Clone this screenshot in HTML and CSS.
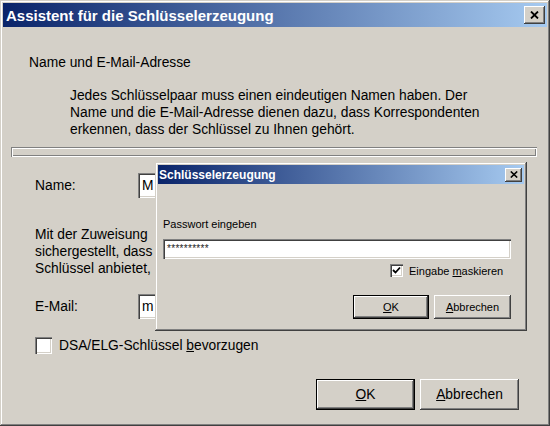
FILE: index.html
```html
<!DOCTYPE html>
<html lang="de">
<head>
  <meta charset="UTF-8" />
  <title>Assistent für die Schlüsselerzeugung</title>
  <link rel="stylesheet" href="styles.css">
</head>
<body>
  <div class="window main">
    <div class="titlebar">
      <span class="title">Assistent für die Schlüsselerzeugung</span>
      <button class="close" title="Schließen">
        <svg width="9" height="8" viewBox="0 0 9 8"><path d="M1 0.5 L8 7.5 M8 0.5 L1 7.5" stroke="#000" stroke-width="1.8" fill="none"/></svg>
      </button>
    </div>

    <div class="content">
      <div class="heading">Name und E-Mail-Adresse</div>
      <p class="intro">
        Jedes Schlüsselpaar muss einen eindeutigen Namen haben. Der<br>
        Name und die E-Mail-Adresse dienen dazu, dass Korrespondenten<br>
        erkennen, dass der Schlüssel zu Ihnen gehört.
      </p>

      <div class="progress"></div>

      <!-- values and the rest of the hint are hidden under the password dialog -->
      <div class="row">
        <label>Name:</label>
        <div class="input">M</div>
      </div>

      <p class="hint">
        Mit der Zuweisung<br>
        sichergestellt, dass<br>
        Schlüssel anbietet,
      </p>

      <div class="row">
        <label>E-Mail:</label>
        <div class="input">m</div>
      </div>

      <label class="check">
        <span class="box"></span>
        <span>DSA/ELG-Schlüssel <u>b</u>evorzugen</span>
      </label>

      <div class="buttons">
        <button class="btn default"><u>O</u>K</button>
        <button class="btn"><u>A</u>bbrechen</button>
      </div>
    </div>

    <div class="window dialog">
      <div class="titlebar">
        <span class="title">Schlüsselerzeugung</span>
        <button class="close" title="Schließen">
          <svg width="8" height="7" viewBox="0 0 8 7"><path d="M0.8 0.5 L7.2 6.5 M7.2 0.5 L0.8 6.5" stroke="#000" stroke-width="1.6" fill="none"/></svg>
        </button>
      </div>
      <div class="content">
        <div class="prompt">Passwort eingeben</div>
        <div class="input pw">**********</div>
        <label class="check small">
          <span class="box">
            <svg width="9" height="9" viewBox="0 0 9 9"><path d="M1 4 L3.5 6.5 L8 1.5" stroke="#000" stroke-width="1.8" fill="none"/></svg>
          </span>
          <span>Eingabe <u>m</u>askieren</span>
        </label>
        <div class="buttons">
          <button class="btn default"><u>O</u>K</button>
          <button class="btn"><u>A</u>bbrechen</button>
        </div>
      </div>
    </div>
  </div>
</body>
</html>
```

FILE: styles.css
```css
* {
  box-sizing: border-box;
}

body {
  margin: 0;
  font-family: 'Liberation Sans', Arial, sans-serif;
  font-size: 13.8px;
  color: #000;
  background: #d4d0c8;
}

.window {
  background: #d4d0c8;
  padding: 3px;
  box-shadow: inset -1px -1px #404040, inset 1px 1px #d4d0c8,
              inset -2px -2px #808080, inset 2px 2px #fff;
}

.main {
  width: 550px;
  height: 426px;
  position: relative;
  display: flex;
  flex-direction: column;
}

.titlebar {
  display: flex;
  justify-content: space-between;
  align-items: center;
  background: linear-gradient(to right, #0a246a, #a6caf0);
  color: white;
  font-weight: bold;
}

.main > .titlebar {
  height: 24px;
  padding: 0 2px 0 3px;
  font-size: 15px;
}

.close {
  display: flex;
  align-items: center;
  justify-content: center;
  padding: 0;
  border: none;
  background: #d4d0c8;
  box-shadow: inset -1px -1px #404040, inset 1px 1px #fff,
              inset -2px -2px #808080, inset 2px 2px #d4d0c8;
}

.main > .titlebar .close {
  width: 21px;
  height: 18px;
}

.main > .content {
  flex: 1;
  padding-top: 27px;
}

.heading {
  margin-left: 26px;
  line-height: 17px;
}

.intro {
  margin: 16px 0 0 67px;
  line-height: 17px;
}

.progress {
  height: 10px;
  margin: 9px 10px 0 8px;
  box-shadow: inset 1px 1px #808080, inset -1px -1px #fff,
              inset 2px 2px #fff, inset -2px -2px #808080;
}

.row {
  display: flex;
  align-items: center;
  margin: 16px 0 0 32px;
}

.row label {
  width: 103px;
}

.input {
  background: #fff;
  white-space: nowrap;
  overflow: hidden;
  box-shadow: inset 1px 1px #808080, inset 2px 2px #404040,
              inset -1px -1px #fff, inset -2px -2px #d4d0c8;
}

.row .input {
  width: 372px;
  height: 25px;
  line-height: 25px;
  padding-left: 4px;
}

.hint {
  margin: 28px 0 0 32px;
  line-height: 17px;
  white-space: nowrap;
}

.hint + .row {
  margin-top: 17px;
}

.check {
  display: flex;
  align-items: center;
  gap: 7px;
  margin: 18px 0 0 32px;
  height: 17px;
}

.check .box {
  width: 17px;
  height: 17px;
  background: #fff;
  display: flex;
  align-items: center;
  justify-content: center;
  box-shadow: inset 1px 1px #808080, inset 2px 2px #404040,
              inset -1px -1px #fff, inset -2px -2px #d4d0c8;
}

.buttons {
  display: flex;
  justify-content: flex-end;
  gap: 5px;
}

.main > .content > .buttons {
  margin: 25px 28px 0 0;
}

.btn {
  font-family: inherit;
  font-size: inherit;
  color: #000;
  border: none;
  background: #d4d0c8;
  box-shadow: inset -1px -1px #404040, inset 1px 1px #fff,
              inset -2px -2px #808080, inset 2px 2px #d4d0c8;
}

.btn.default {
  box-shadow: inset 0 0 0 1px #000, inset -2px -2px #404040, inset 2px 2px #fff,
              inset -3px -3px #808080;
}

.main > .content > .buttons .btn {
  width: 99px;
  height: 31px;
}

/* password dialog lies over the wizard */
.dialog {
  position: absolute;
  left: 155px;
  top: 162px;
  width: 372px;
  height: 169px;
  font-size: 11px;
}

.dialog .titlebar {
  height: 19px;
  padding: 0 2px 0 1px;
  font-size: 12px;
}

.dialog .close {
  width: 17px;
  height: 14px;
}

.dialog .content {
  padding: 33px 13px 0 5px;
}

.prompt {
  line-height: 14px;
}

.input.pw {
  margin-top: 8px;
  height: 20px;
  line-height: 20px;
  padding-left: 4px;
  font-size: 10px;
  letter-spacing: 0.3px;
  color: #222;
}

.check.small {
  margin: 5px 0 0 227px;
  height: 13px;
  gap: 6px;
}

.check.small .box {
  width: 13px;
  height: 13px;
}

.dialog .buttons {
  margin-top: 18px;
}

.dialog .buttons .btn {
  width: 76px;
  height: 24px;
}

.dialog .buttons .btn + .btn {
  width: 77px;
}
```
